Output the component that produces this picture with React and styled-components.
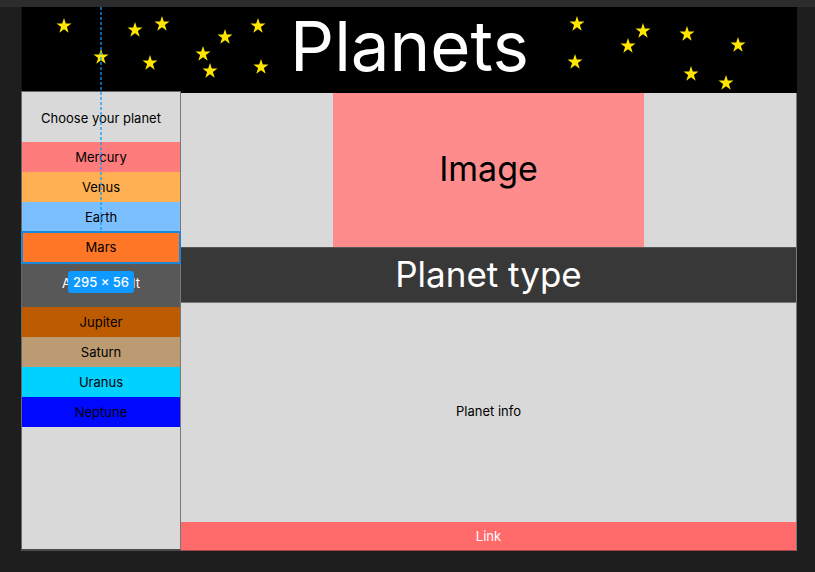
import React from "react";
import styled, { createGlobalStyle } from "styled-components";

const GlobalStyle = createGlobalStyle`
  *, *::before, *::after { box-sizing: border-box; }
  body {
    margin: 0;
    background: #1e1e1e;
    font-family: Inter, "Liberation Sans", sans-serif;
    font-size: 13px;
    line-height: 16px;
    font-optical-sizing: none;
  }
`;

const Canvas = styled.div`
  display: flex;
  flex-direction: column;
  min-height: 100vh;
  padding: 0 18px 21px 21px;
  border-top: 7px solid #2c2c2c;
`;

const Frame = styled.div`
  position: relative;
  flex: 1;
  display: flex;
  flex-direction: column;
`;

const Header = styled.header`
  position: relative;
  display: flex;
  align-items: center;
  justify-content: center;
  height: 86px;
  background: #000;
  border-left: 1px solid #141414;
`;

const Title = styled.h1`
  margin: 0;
  padding-bottom: 8px;
  color: #fff;
  font-size: 69px;
  font-weight: 400;
  line-height: 80px;
`;

const StarField = styled.svg`
  position: absolute;
  inset: 0;
  width: 100%;
  height: 100%;
  fill: #ffe600;
`;

const Body = styled.div`
  flex: 1;
  display: grid;
  grid-template-columns: 160px 1fr;
`;

const Sidebar = styled.nav`
  position: relative;
  z-index: 1;
  margin-top: -2px;
  background: #d9d9d9;
  border: 1px solid #666;
  border-right-color: #777;
  border-bottom: 2px solid #4a4a4a;
`;

const SidebarHeading = styled.h2`
  display: flex;
  align-items: center;
  justify-content: center;
  height: 50px;
  margin: 0;
  padding-top: 2px;
  font-size: 13px;
  font-weight: 400;
`;

const PlanetList = styled.ul`
  margin: 0;
  padding: 0;
  list-style: none;
`;

const PlanetItem = styled.li`
  position: relative;
  z-index: ${({ $selected }) => ($selected ? 1 : 0)};
`;

const PlanetButton = styled.button`
  display: block;
  width: 100%;
  height: ${({ $tall, $selected }) => ($tall ? 44 : $selected ? 31 : 30)}px;
  padding: 0 0 ${({ $tall }) => ($tall ? 4 : 1)}px;
  border: 0;
  outline: ${({ $selected }) => ($selected ? "2px solid #1a86dc" : "none")};
  outline-offset: -1px;
  background: ${({ $fill }) => $fill};
  color: ${({ $light }) => ($light ? "#fff" : "#000")};
  font: inherit;
`;

const SizeBadge = styled.span`
  position: absolute;
  top: 100%;
  left: 50%;
  transform: translateX(-50%);
  margin-top: 8px;
  padding: 0 5px;
  border-radius: 3px;
  background: #0d99ff;
  color: #fff;
  font-size: 13px;
  font-weight: 500;
  line-height: 22px;
  white-space: nowrap;
`;

const Guide = styled.div`
  position: absolute;
  z-index: 2;
  top: 0;
  left: 79px;
  width: 2px;
  height: 223px;
  background: repeating-linear-gradient(#0d99ff 0 3px, transparent 3px 5px);
  opacity: 0.65;
  pointer-events: none;
`;

const Main = styled.main`
  display: flex;
  flex-direction: column;
  background: #d9d9d9;
  border-right: 1px solid #777;
`;

const ImagePanel = styled.div`
  display: flex;
  align-items: center;
  justify-content: center;
  align-self: center;
  width: 50.5%;
  height: 154px;
  padding-bottom: 2px;
  background: #ff8c8c;
  font-size: 34px;
  line-height: 42px;
`;

const TypeBar = styled.h2`
  margin: 0;
  padding-bottom: 2px;
  border-top: 1px solid #555;
  border-bottom: 1px solid #777;
  background: #383838;
  color: #fff;
  font-size: 35px;
  font-weight: 400;
  line-height: 52px;
  text-align: center;
`;

const Info = styled.p`
  flex: 1;
  display: flex;
  align-items: center;
  justify-content: center;
  margin: 0;
  padding-bottom: 4px;
`;

const MoreLink = styled.a`
  border-bottom: 1px solid #a34848;
  background: #ff6b6b;
  color: #fff;
  line-height: 28px;
  text-align: center;
  text-decoration: none;
`;

const planets = [
  { name: "Mercury", fill: "#ff7c7c" },
  { name: "Venus", fill: "#ffb052" },
  { name: "Earth", fill: "#7cbfff" },
  { name: "Mars", fill: "#ff7626", selected: true, size: "295 × 56" },
  { name: "Asteroid belt", fill: "#585858", light: true, tall: true },
  { name: "Jupiter", fill: "#bd5b00" },
  { name: "Saturn", fill: "#bc9a72" },
  { name: "Uranus", fill: "#00d1ff" },
  { name: "Neptune", fill: "#0008ff" },
];

const stars = [
  [42, 19], [113, 23], [140, 17], [79, 50], [128, 56], [181, 47],
  [188, 64], [203, 30], [236, 19], [239, 60], [555, 17], [553, 55],
  [621, 24], [606, 39], [665, 27], [669, 67], [716, 38], [704, 76],
];

const STAR = "M0-8L1.8-2.5H7.5L2.9 1L4.7 6.8L0 3.3L-4.7 6.8L-2.9 1L-7.5-2.5H-1.8Z";

export default function App() {
  return (
    <>
      <GlobalStyle />
      <Canvas>
        <Frame>
          <Header>
            <StarField viewBox="0 0 775 86" preserveAspectRatio="xMidYMid slice" aria-hidden="true">
              {stars.map(([x, y]) => (
                <path key={`${x}-${y}`} d={STAR} transform={`translate(${x} ${y})`} />
              ))}
            </StarField>
            <Title>Planets</Title>
          </Header>
          <Body>
            <Sidebar aria-label="Planets">
              <SidebarHeading>Choose your planet</SidebarHeading>
              <PlanetList>
                {planets.map(({ name, fill, selected, light, tall, size }) => (
                  <PlanetItem key={name} $selected={selected}>
                    <PlanetButton type="button" $fill={fill} $selected={selected} $light={light} $tall={tall}>
                      {name}
                    </PlanetButton>
                    {size && <SizeBadge>{size}</SizeBadge>}
                  </PlanetItem>
                ))}
              </PlanetList>
            </Sidebar>
            <Main>
              <ImagePanel>Image</ImagePanel>
              <TypeBar>Planet type</TypeBar>
              <Info>Planet info</Info>
              <MoreLink href="#link">Link</MoreLink>
            </Main>
          </Body>
          <Guide />
        </Frame>
      </Canvas>
    </>
  );
}
